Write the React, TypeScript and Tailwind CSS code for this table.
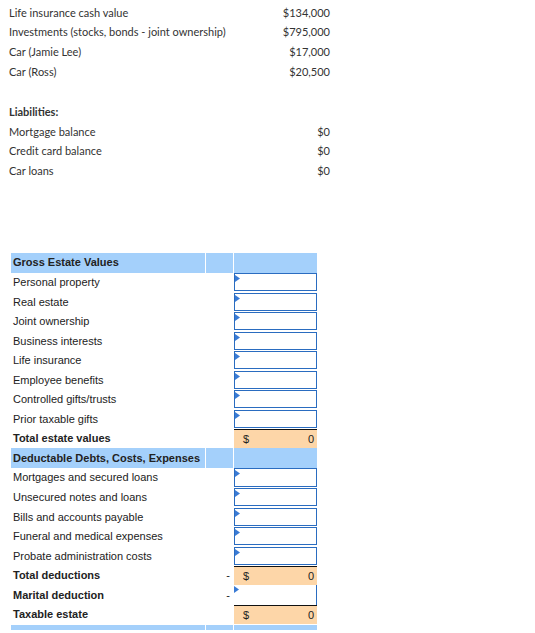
import React from 'react';

type Row = {
  label: string;
  kind: 'head' | 'input' | 'total' | 'inputOpen';
  bold?: boolean;
  minus?: boolean;
};

const assets = [
  { label: 'Life insurance cash value', value: '$134,000' },
  { label: 'Investments (stocks, bonds - joint ownership)', value: '$795,000' },
  { label: 'Car (Jamie Lee)', value: '$17,000' },
  { label: 'Car (Ross)', value: '$20,500' },
];

const liabilities = [
  { label: 'Mortgage balance', value: '$0' },
  { label: 'Credit card balance', value: '$0' },
  { label: 'Car loans', value: '$0' },
];

const rows: Row[] = [
  { label: 'Gross Estate Values', kind: 'head' },
  { label: 'Personal property', kind: 'input' },
  { label: 'Real estate', kind: 'input' },
  { label: 'Joint ownership', kind: 'input' },
  { label: 'Business interests', kind: 'input' },
  { label: 'Life insurance', kind: 'input' },
  { label: 'Employee benefits', kind: 'input' },
  { label: 'Controlled gifts/trusts', kind: 'input' },
  { label: 'Prior taxable gifts', kind: 'input' },
  { label: 'Total estate values', kind: 'total', bold: true },
  { label: 'Deductable Debts, Costs, Expenses', kind: 'head' },
  { label: 'Mortgages and secured loans', kind: 'input' },
  { label: 'Unsecured notes and loans', kind: 'input' },
  { label: 'Bills and accounts payable', kind: 'input' },
  { label: 'Funeral and medical expenses', kind: 'input' },
  { label: 'Probate administration costs', kind: 'input' },
  { label: 'Total deductions', kind: 'total', bold: true, minus: true },
  { label: 'Marital deduction', kind: 'inputOpen', bold: true, minus: true },
  { label: 'Taxable estate', kind: 'total', bold: true },
];

const Marker = () => (
  <svg width="5" height="7" viewBox="0 0 5 7" className="absolute left-0 top-[1px]">
    <polygon points="0,0 5,3.5 0,7" fill="#3a7bd5" />
  </svg>
);

const ValueCell = ({ kind }: { kind: Row['kind'] }) => {
  if (kind === 'head') return <div className="h-full bg-[#a4d0fb]" />;
  if (kind === 'total')
    return (
      <div className="h-full bg-[#fdd6a8] border-t border-[#111] flex items-center justify-between pl-[9px] pr-[3px]">
        <span>$</span>
        <span>0</span>
      </div>
    );
  if (kind === 'inputOpen')
    return (
      <div className="relative h-full border-r border-[#2a6cc0]">
        <Marker />
      </div>
    );
  return (
    <div className="h-full pt-[0.5px] pb-[1px]">
      <div className="relative h-full border border-[#2a6cc0]">
        <Marker />
      </div>
    </div>
  );
};

const App: React.FC = () => {
  return (
    <div className="w-[535px] h-[633px] bg-white overflow-hidden">
      <div className="w-[330px] pl-[9px] pt-[3px] text-[11px] text-[#333] font-['Lato',sans-serif]">
        {assets.map((a) => (
          <div key={a.label} className="h-[19.8px] flex items-center justify-between">
            <span>{a.label}</span>
            <span>{a.value}</span>
          </div>
        ))}
        <div className="mt-[19.9px] h-[19.8px] flex items-center font-bold">Liabilities:</div>
        {liabilities.map((a) => (
          <div key={a.label} className="h-[19.8px] flex items-center justify-between">
            <span>{a.label}</span>
            <span>{a.value}</span>
          </div>
        ))}
      </div>

      <div className="ml-[11px] mt-[71.7px] w-[306px] text-[11px] text-[#222] font-['Liberation_Sans',Arial,sans-serif]">
        {rows.map((r) => (
          <div
            key={r.label}
            className="grid grid-cols-[194px_27px_83px] gap-x-[1px] h-[19.56px]"
          >
            <div
              className={
                'flex items-center pl-[2px] ' +
                (r.kind === 'head' ? 'bg-[#a4d0fb] font-bold' : r.bold ? 'font-bold' : '')
              }
            >
              {r.label}
            </div>
            <div
              className={
                'flex items-center justify-end pr-[3px] ' +
                (r.kind === 'head' ? 'bg-[#a4d0fb]' : '')
              }
            >
              {r.minus ? '-' : ''}
            </div>
            <ValueCell kind={r.kind} />
          </div>
        ))}
        <div className="grid grid-cols-[194px_27px_83px] gap-x-[1px] h-[5px] mt-[0.5px]">
          <div className="bg-[#a4d0fb]" />
          <div className="bg-[#a4d0fb]" />
          <div className="bg-[#a4d0fb]" />
        </div>
      </div>
    </div>
  );
};

export default App;
